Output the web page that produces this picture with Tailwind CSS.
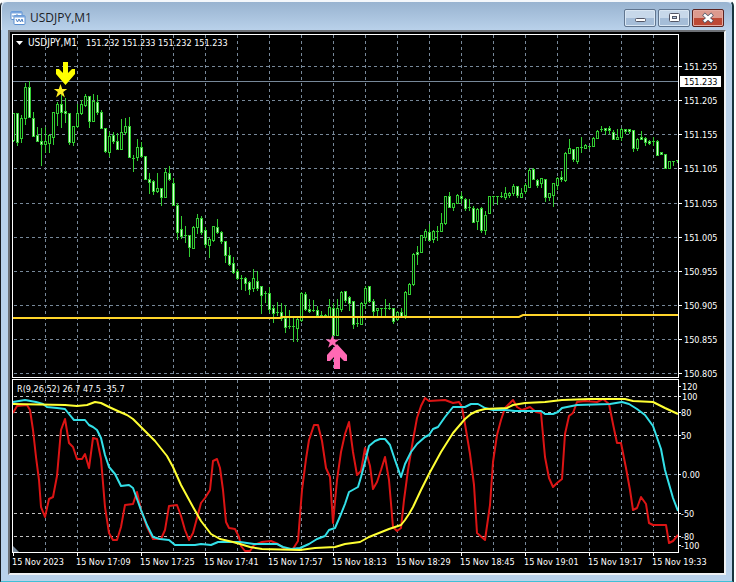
<!DOCTYPE html>
<html lang="en">
<head>
  <meta charset="UTF-8" />
  <meta name="viewport" content="width=device-width, initial-scale=1.0" />
  <title>USDJPY,M1</title>
  <script src="https://cdn.jsdelivr.net/npm/@tailwindcss/browser@4"></script>
</head>
<body class="bg-white">
  <main class="mr-0.5 flex min-h-screen flex-col rounded-t-md border-t-2 border-r-2 border-b-2 border-l border-t-[#f4f7fb] border-r-[#17343e] border-b-[#3fbfd6] border-l-[#15181c] bg-[#b9d1ea]">
    <header class="flex h-7 shrink-0 items-center justify-between rounded-t-md border-l border-[#e3edf8] bg-linear-to-b from-[#98b3d0] to-[#b9d1ea] pt-1 pr-2 pl-2">
      <div class="flex items-center gap-1">
        <svg class="size-4" viewBox="0 0 16 16" fill="none" aria-hidden="true">
          <rect x="1" y="1.500" width="11" height="8" rx="1" fill="#fff" stroke="#5b8fd0" />
          <path d="M1 2.500h11" stroke="#78a5df" stroke-width="2" />
          <path d="M3 7V5M5 8V5M7 6V4" stroke="#5b8fd0" />
          <rect x="4" y="5.500" width="11" height="9" rx="1" fill="#fff" stroke="#5b8fd0" />
          <path d="M4 6.500h11" stroke="#78a5df" stroke-width="2" />
          <path d="M6 9l1.500 3L9 9l1.500 3L12 9l1 3" stroke="#4b7fc4" />
        </svg>
        <h1 class="font-['Open_Sans',sans-serif] text-[12px] leading-4 text-[#1c2126]">USDJPY,M1</h1>
      </div>
      <div class="flex gap-0.5">
        <button type="button" aria-label="Minimize" class="flex h-[18px] w-8 items-center justify-center rounded-xs border border-[#60758f] bg-linear-to-b from-[#c7d8ea] from-50% to-[#a5bdd8] to-50% shadow-[inset_0_0_0_1px_#d9e6f3]">
          <svg class="size-4" viewBox="0 0 16 16" aria-hidden="true"><rect x="3.500" y="8.500" width="10" height="3" rx="1" fill="#fff" stroke="#535666" /></svg>
        </button>
        <button type="button" aria-label="Maximize" class="flex h-[18px] w-8 items-center justify-center rounded-xs border border-[#60758f] bg-linear-to-b from-[#c7d8ea] from-50% to-[#a5bdd8] to-50% shadow-[inset_0_0_0_1px_#d9e6f3]">
          <svg class="size-4" viewBox="0 0 16 16" aria-hidden="true">
            <rect x="3.500" y="3.500" width="10" height="8" rx="1" fill="#fff" stroke="#535666" />
            <rect x="6.500" y="6.500" width="4" height="2" fill="#b5c9df" stroke="#535666" />
          </svg>
        </button>
        <button type="button" aria-label="Close" class="flex h-[18px] w-8 items-center justify-center rounded-xs border border-[#5b2320] bg-linear-to-b from-[#dc9a8e] from-50% to-[#bd4935] to-50% shadow-[inset_0_0_0_1px_#e4aaa0]">
          <svg class="size-4" viewBox="0 0 16 16" fill="none" aria-hidden="true">
            <path d="M3.500 4l9 8M12.500 4l-9 8" stroke="#535666" stroke-width="4" />
            <path d="M4 4.500l8 7M12 4.500l-8 7" stroke="#fff" stroke-width="2.600" />
          </svg>
        </button>
      </div>
    </header>

    <section class="mr-1.5 mb-1.5 ml-[7px] border-t-2 border-r-2 border-b-2 border-l-2 border-t-[#6d7075] border-r-[#eef1f4] border-b-[#eef1f4] border-l-[#6d7075] bg-black">
      <svg class="block w-full font-['DejaVu_Sans_Condensed','DejaVu_Sans',sans-serif] text-[9px]" viewBox="10 32 714 541" role="img" aria-label="USDJPY M1 candlestick chart">
        <g id="grid" class="stroke-[#778899]" stroke-dasharray="3 3" shape-rendering="crispEdges"></g>
        <g id="levels" class="stroke-[#c0c0c0]" stroke-dasharray="3 3" shape-rendering="crispEdges"></g>
        <path d="M13 81.500H678" class="stroke-[#778899]" shape-rendering="crispEdges" />
        <g id="candles" class="stroke-[#32cd32]" shape-rendering="crispEdges"></g>

        <path d="M13 318H280L282 317H519L523 315H678" fill="none" class="stroke-[#ffd52a]" stroke-width="2" />

        <!-- signals -->
        <path d="M63 62h5v11l4-4h3v5L65.500 85 56 74v-5h3l4 4z" fill="#ffff00" />
        <path d="M60.500 84l1.700 5h5l-4 3 1.700 5.500-4.400-3.400-4.400 3.400 1.700-5.500-4-3h5z" fill="#ffee22" />
        <path d="M332.500 335l1.700 4.500h5l-4 3.200 1.700 5-4.400-3.300-4.400 3.300 1.700-5-4-3.200h5z" fill="#ff69b4" />
        <path d="M334 369h6V357l4 4h3v-6L337 344l-10 11v6h3l4-4z" fill="#ff69b4" />

        <g fill="none" stroke-width="2" stroke-linejoin="round">
          <polyline class="stroke-[#dc1414]" points="13,413 17,406 27,405 30,410 33,430 36,457 39,480 41,507 45,517 49,499 53,497 57,476 61,430 65,419 69,443 73,447 77,459 82,459 85,454 89,468 93,438 97,439 101,459 105,507 109,533 113,540 117,540 121,527 125,505 133,504 137,492 141,510 147,527 153,539 161,539 165,530 169,506 177,505 181,516 185,530 189,540 193,533 197,518 201,503 205,498 210,490 213,461 217,459 220,468 223,490 226,522 229,528 235,529 239,537 241,546 245,551 250,551 254,545 262,542 271,541 278,544 285,549 293,549 298,541 302,490 306,459 309,440 314,425 318,425 322,441 326,468 330,477 333,523 337,480 341,452 345,434 349,422 353,452 357,475 361,471 365,448 370,466 373,489 377,482 381,470 385,457 389,480 393,527 397,531 401,528 404,500 408,470 413,440 417,418 421,406 425,398 429,401 445,400 453,403 459,402 462,407 466,430 470,454 474,485 477,533 485,540 490,505 493,462 497,435 501,420 505,408 513,400 517,407 522,410 530,407 536,412 541,413 545,457 549,478 553,487 557,483 562,479 565,434 569,416 573,413 577,402 585,401 597,402 603,399 609,404 613,424 617,443 621,443 626,468 630,490 633,510 637,508 641,497 646,504 649,523 653,525 666,525 669,543 673,541 678,535" />
          <polyline class="stroke-[#33e0e8]" points="13,402 25,400 36,402 43,404 47,407 57,408 65,409 69,414 74,420 85,420 89,425 93,427 97,430 101,438 105,455 109,467 115,474 121,486 129,485 133,488 137,499 141,510 147,525 153,537 160,539 169,540 175,545 195,545 201,544 211,545 218,542 240,542 254,544 277,544 283,547 291,549 300,548 309,544 317,539 325,536 329,530 335,528 341,514 345,504 349,492 358,487 361,477 365,462 369,446 375,441 380,439 385,439 390,445 395,460 401,477 405,464 411,452 417,444 425,437 429,435 433,429 438,427 445,417 453,407 465,407 471,404 478,404 485,408 493,410 505,410 515,411 541,411 545,414 553,414 558,412 562,408 577,405 610,404 622,402 629,404 637,409 645,415 653,426 661,449 665,470 669,484 673,498 678,511" />
          <polyline class="stroke-[#ffff33]" points="13,404 65,405 77,406 87,405 95,402 101,403 109,407 120,412 127,415 133,419 141,427 155,441 167,456 173,467 181,485 193,507 201,521 211,534 220,539 233,542 240,544 250,547 262,549 300,550 315,548 335,547 345,544 360,542 369,537 389,529 401,525 405,520 409,514 413,507 421,490 429,474 441,452 453,433 465,419 471,414 477,411 485,409 507,408 513,405 525,403 545,402 562,400 590,399 625,399 633,401 653,402 665,408 678,414" />
        </g>
        <path d="M13 546l6 6h-6z" fill="#778899" />

        <!-- window frames and axis ticks -->
        <path d="M12.500 377.500V34.500H678.500V377.500zM12.500 552.500V379.500H678.500V552.500z" fill="none" stroke="#fff" shape-rendering="crispEdges" />
        <g id="ticks" stroke="#fff" shape-rendering="crispEdges"></g>

        <path d="M16 41h7l-3.500 4z" fill="#fff" />
        <text x="28" y="46" fill="#fff" class="text-[10px]">USDJPY,M1</text>
        <text x="86" y="46" fill="#fff">151.232 151.233 151.232 151.233</text>
        <text x="17" y="392" fill="#fff">R(9,26,52) 26.7 47.5 -35.7</text>
        <g id="labels" fill="#fff"></g>
        <rect x="680" y="76" width="41" height="11" fill="#fff" />
        <text x="684" y="85" fill="#000">151.233</text>
      </svg>
    </section>
  </main>

  <script>
    const ns = "http://www.w3.org/2000/svg";

    function add(parent, tag, attrs, text) {
      const el = document.createElementNS(ns, tag);
      for (const key in attrs) el.setAttribute(key, attrs[key]);
      if (text) el.textContent = text;
      document.getElementById(parent).appendChild(el);
    }

    const prices = [
      ["151.255", 66], ["151.205", 100], ["151.155", 134], ["151.105", 168], ["151.055", 203],
      ["151.005", 237], ["150.955", 271], ["150.905", 305], ["150.855", 339], ["150.805", 373],
    ];
    const levels = [[100, 396], [80, 412], [50, 435], [-50, 513], [-80, 536]];
    const scale = [
      ["120", 386, 682], ["100", 396, 682], ["80", 412, 681], ["50", 435, 681],
      ["0.00", 474, 682], ["-50", 513, 681], ["-80", 536, 681], ["-100", 545, 681],
    ];
    const times = ["2023", "17:09", "17:25", "17:41", "17:57", "18:13", "18:29", "18:45", "19:01", "19:17", "19:33"];

    for (let x = 45; x < 678; x += 32) {
      add("grid", "path", { d: `M${x}.5 35V377M${x}.5 380V552` });
    }
    for (const [label, y] of prices) {
      add("grid", "path", { d: `M14 ${y}.5H678` });
      add("ticks", "path", { d: `M679 ${y}.5h3` });
      add("labels", "text", { x: 684, y: y + 4 }, label);
    }
    add("grid", "path", { d: "M14 474.5H678" });
    for (const [, y] of levels) {
      add("levels", "path", { d: `M14 ${y}.5H678` });
    }
    for (const [label, y, x] of scale) {
      add("ticks", "path", { d: `M679 ${y}.5h2` });
      add("labels", "text", { x: x, y: y + 4 }, label);
    }
    times.forEach((time, i) => {
      const x = 13 + i * 64;
      add("ticks", "path", { d: `M${x}.5 553v3` });
      add("labels", "text", { x: x - 1, y: 565 }, "15 Nov " + time);
    });

    // high, body top, body bottom, low, 1 = bearish (filled)
    const candles = [
      [113,113,140,141,0],[113,113,142,145,1],[115,118,138,142,0],[83,87,118,124,0],[81,87,117,117,1],
      [112,118,136,136,1],[127,135,141,141,1],[128,141,144,165,1],[127,141,144,152,0],[134,135,143,152,0],
      [112,112,137,144,0],[102,104,113,125,0],[95,104,112,127,1],[98,111,113,122,1],[113,113,142,144,1],
      [126,126,142,145,0],[104,113,126,127,0],[100,104,113,114,0],[94,96,105,106,0],[96,96,121,127,1],
      [94,101,121,121,0],[95,102,112,114,1],[110,112,128,128,1],[128,128,151,152,1],[132,136,152,156,0],
      [132,135,141,143,1],[133,141,149,149,1],[119,132,149,149,0],[118,126,132,134,0],[117,126,157,157,1],
      [155,158,159,171,1],[139,147,157,160,0],[142,147,156,157,1],[156,156,179,179,1],[173,179,182,193,1],
      [180,181,191,194,1],[173,188,191,192,0],[188,188,197,205,1],[168,172,197,197,0],[166,173,179,180,1],
      [178,183,205,205,1],[203,205,232,239,1],[216,229,236,238,1],[226,235,236,242,1],[235,235,247,256,1],
      [226,227,248,248,0],[214,218,227,233,0],[216,218,232,234,1],[227,230,244,247,1],[237,239,245,257,0],
      [226,226,240,241,0],[219,227,232,233,1],[231,232,241,243,1],[241,241,255,262,1],[247,255,264,265,1],
      [257,263,272,273,1],[269,271,278,279,1],[275,278,279,289,1],[277,278,283,290,1],[281,282,289,294,1],
      [269,278,288,291,0],[271,281,288,290,1],[286,286,295,313,1],[291,293,294,302,1],[287,293,309,312,1],
      [305,308,313,322,1],[302,312,313,315,1],[303,312,318,320,1],[305,318,327,332,1],[310,326,327,328,1],
      [318,326,327,341,1],[318,319,328,341,0],[292,293,320,321,0],[292,294,309,310,1],[299,309,311,312,1],
      [300,310,311,311,1],[306,310,315,316,1],[311,315,316,316,1],[314,315,316,316,1],[299,307,316,316,0],
      [303,308,335,335,1],[299,308,335,335,0],[291,292,309,311,0],[291,291,300,302,1],[296,297,303,310,1],
      [301,301,324,328,1],[316,323,324,326,1],[302,303,324,324,0],[286,288,303,308,0],[286,286,301,302,1],
      [299,301,311,316,1],[308,308,310,316,0],[308,308,309,316,1],[299,308,309,316,1],[303,308,309,309,1],
      [308,308,321,323,1],[311,312,319,320,0],[308,312,316,317,1],[291,292,315,318,0],[283,284,294,294,0],
      [253,254,284,285,0],[246,252,254,264,1],[235,235,252,252,0],[229,231,237,240,0],[224,232,240,240,1],
      [230,231,239,242,0],[226,231,232,240,1],[213,223,231,231,0],[196,196,223,224,0],[192,196,207,207,1],
      [203,203,207,210,0],[194,195,203,203,0],[192,196,198,203,1],[198,199,208,210,1],[199,207,208,210,1],
      [206,208,222,222,1],[208,209,221,229,0],[207,208,230,232,1],[211,215,230,234,0],[196,196,213,213,0],
      [196,196,197,204,1],[196,196,197,204,1],[192,196,197,197,1],[187,193,197,199,0],[192,193,195,197,0],
      [184,186,193,195,0],[186,186,195,197,1],[188,193,197,197,0],[183,185,191,193,0],[168,170,187,187,0],
      [168,169,179,179,1],[179,180,185,187,1],[178,178,183,187,0],[179,179,197,201,1],[193,193,197,200,0],
      [183,183,195,206,0],[177,178,185,189,0],[171,177,179,181,1],[152,153,180,181,0],[139,148,153,153,0],
      [149,149,159,161,1],[147,147,161,163,0],[137,147,148,152,1],[144,145,148,148,0],[146,146,147,148,1],
      [137,138,146,146,0],[130,131,138,138,0],[126,129,130,131,1],[128,128,130,134,1],[126,128,130,133,1],
      [130,132,139,139,1],[129,137,139,139,0],[128,129,137,140,0],[129,129,131,133,1],[129,129,131,133,1],
      [130,130,148,151,1],[138,139,148,150,0],[131,137,139,139,1],[137,138,142,145,1],[140,141,143,144,1],
      [137,141,142,145,1],[140,141,155,155,1],[152,152,154,154,1],[154,154,168,168,1],[161,161,168,168,0],
      [161,161,162,165,1],[160,160,161,162,1],
    ];

    candles.forEach(([high, top, bottom, low, bearish], i) => {
      const x = 13 + i * 4;
      add("candles", "path", { d: `M${x}.5 ${high}V${low + 1}` });
      if (bottom - top < 2) {
        add("candles", "path", { d: `M${x - 1} ${top}.5h3` });
      } else {
        add("candles", "rect", {
          x: x - 0.5, y: top + 0.5, width: 2, height: bottom - top,
          fill: bearish ? "#d8ffd8" : "#000",
        });
      }
    });
  </script>
</body>
</html>
